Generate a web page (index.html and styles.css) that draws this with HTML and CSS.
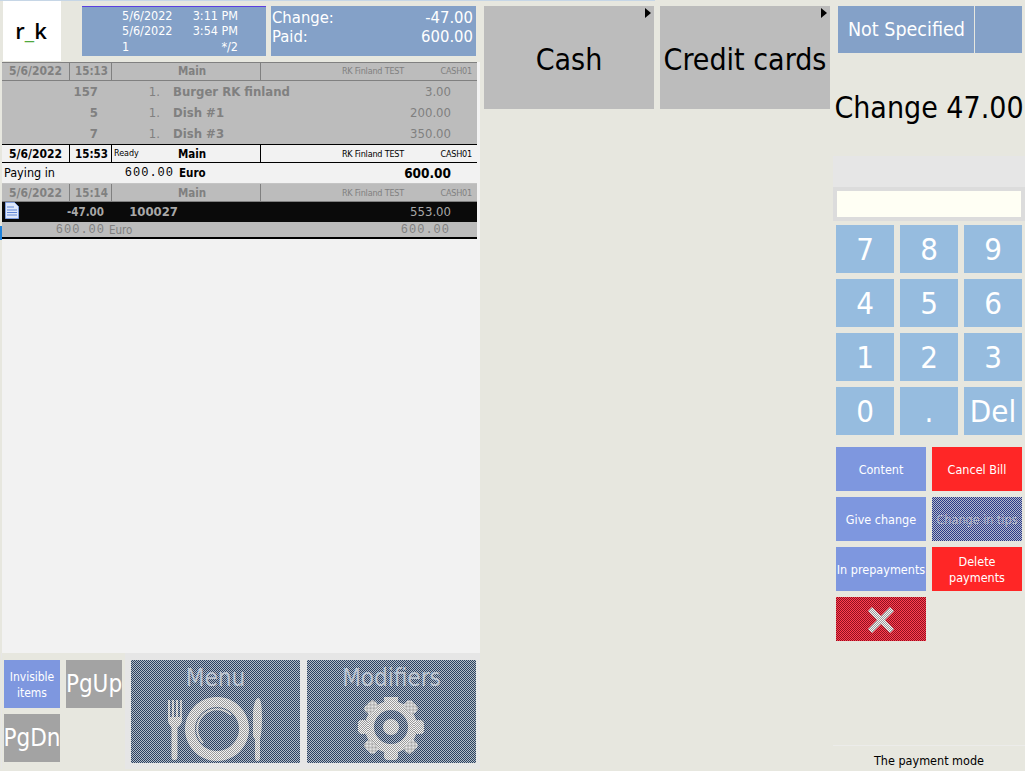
FILE: index.html
```html
<!DOCTYPE html>
<html lang="en">
<head>
<meta charset="utf-8">
<title>Payment</title>
<link rel="stylesheet" href="styles.css">
</head>
<body>
<svg class="defs" width="0" height="0" aria-hidden="true">
  <defs>
    <pattern id="dither" width="2" height="2" patternUnits="userSpaceOnUse">
      <rect width="2" height="2" fill="#f4f4f4"/>
      <rect width="1" height="1" fill="#9a9a9a"/>
      <rect x="1" y="1" width="1" height="1" fill="#9a9a9a"/>
    </pattern>
  </defs>
</svg>
<i class="edge-mark"></i>
<div class="topline"></div>
<div class="app">
  <section class="left">
    <header class="head">
      <div class="logo"><span>r<i class="under">_</i>k</span></div>
      <div class="info-times">
        <div class="times-row"><span>5/6/2022</span><span>3:11 PM</span></div>
        <div class="times-row"><span>5/6/2022</span><span>3:54 PM</span></div>
        <div class="times-row times-last"><span>1</span><span>*/2</span></div>
      </div>
      <div class="info-sum">
        <div class="sum-row"><span>Change:</span><span>-47.00</span></div>
        <div class="sum-row"><span>Paid:</span><span>600.00</span></div>
      </div>
    </header>
    <div class="list">
      <div class="bar bar-grey">
        <b class="c-date">5/6/2022</b><b class="c-time">15:13</b><b class="c-main"><em></em>Main</b><span class="c-rest">RK Finland TEST</span><span class="c-cash">CASH01</span>
      </div>
      <div class="dish"><b class="d-code">157</b><span class="d-qty">1.</span><b class="d-name">Burger RK finland</b><span class="d-price">3.00</span></div>
      <div class="dish"><b class="d-code">5</b><span class="d-qty">1.</span><b class="d-name">Dish #1</b><span class="d-price">200.00</span></div>
      <div class="dish"><b class="d-code">7</b><span class="d-qty">1.</span><b class="d-name">Dish #3</b><span class="d-price">350.00</span></div>
      <div class="bar bar-active">
        <b class="c-date">5/6/2022</b><b class="c-time">15:53</b><b class="c-main"><em>Ready</em>Main</b><span class="c-rest">RK Finland TEST</span><span class="c-cash">CASH01</span>
      </div>
      <div class="paying"><span class="p-label">Paying in</span><span class="p-amount">600.00</span><b class="p-cur">Euro</b><b class="p-total">600.00</b></div>
      <div class="bar bar-grey bar-third">
        <b class="c-date">5/6/2022</b><b class="c-time">15:14</b><b class="c-main"><em></em>Main</b><span class="c-rest">RK Finland TEST</span><span class="c-cash">CASH01</span>
      </div>
      <div class="black-row">
        <svg class="doc" width="14" height="17" viewBox="0 0 14 17"><path d="M.5.5h9l4 4v12H.5z" fill="#dfe8fa" stroke="#7f9fe0"/><path d="M2 5h7M2 8h10M2 10.500h10M2 13h10" stroke="#5f86d8"/></svg>
        <b class="b-diff">-47.00</b><b class="b-code">100027</b><span class="b-sum">553.00</span>
      </div>
      <div class="grey-row"><span class="g-amount">600.00</span><span class="g-cur">Euro</span><span class="g-total">600.00</span></div>
    </div>
    <footer class="foot">
      <div class="foot-small">
        <button class="btn periw small-text">Invisible<br>items</button>
        <button class="btn gray pg">PgUp</button>
        <button class="btn gray pg">PgDn</button>
      </div>
      <button class="btn dither tile">
        <span class="tile-label">Menu</span>
        <svg class="tile-ico" width="169" height="66" viewBox="0 0 169 66">
          <g fill="url(#dither)">
            <path d="M37 3h2v17h2V3h2v17h2V3h2v17h2V3h2v20c0 4-3 6-4.500 7.500V59c0 3-1 4-3 4s-3-1-3-4V30.500C40 29 37 27 37 23z"/>
            <path fill-rule="evenodd" d="M86 0a32 32 0 1 0 .01 0zM86 10a22 22 0 1 1-.01 0z"/>
            <path d="M127 1c3 0 4 8 4 20s-1 17-2 21v18c0 3-1 4-2.500 4s-2.500-1-2.500-4V42c-1-1-2-2-2-4V18c0-10 3-17 5-17z"/>
          </g>
          <path d="M72 46A19.500 19.500 0 0 1 100 18" fill="none" stroke="url(#dither)" stroke-width="2"/>
        </svg>
      </button>
      <button class="btn dither tile">
        <span class="tile-label">Modifiers</span>
        <svg class="tile-ico" width="169" height="66" viewBox="0 0 169 66">
          <g fill="url(#dither)" transform="translate(84 30)">
            <circle r="8"/>
            <path fill-rule="evenodd" d="M0-26a26 26 0 1 0 .01 0zM0-17a17 17 0 1 1-.01 0z"/>
            <rect x="-7" y="-33" width="14" height="10" rx="4"/>
            <rect x="-7" y="-33" width="14" height="10" rx="4" transform="rotate(45)"/>
            <rect x="-7" y="-33" width="14" height="10" rx="4" transform="rotate(90)"/>
            <rect x="-7" y="-33" width="14" height="10" rx="4" transform="rotate(135)"/>
            <rect x="-7" y="-33" width="14" height="10" rx="4" transform="rotate(180)"/>
            <rect x="-7" y="-33" width="14" height="10" rx="4" transform="rotate(225)"/>
            <rect x="-7" y="-33" width="14" height="10" rx="4" transform="rotate(270)"/>
            <rect x="-7" y="-33" width="14" height="10" rx="4" transform="rotate(315)"/>
          </g>
        </svg>
      </button>
    </footer>
  </section>

  <section class="middle">
    <button class="btn pay">Cash<i class="arrow"></i></button>
    <button class="btn pay">Credit cards<i class="arrow"></i></button>
  </section>

  <section class="right">
    <div class="spec">
      <div class="spec-name">Not Specified</div>
      <div class="spec-side"></div>
    </div>
    <div class="change">Change 47.00</div>
    <div class="display"></div>
    <div class="entry"><div class="entry-field"></div></div>
    <div class="keypad">
      <button class="btn key">7</button><button class="btn key">8</button><button class="btn key">9</button>
      <button class="btn key">4</button><button class="btn key">5</button><button class="btn key">6</button>
      <button class="btn key">1</button><button class="btn key">2</button><button class="btn key">3</button>
      <button class="btn key">0</button><button class="btn key">.</button><button class="btn key">Del</button>
    </div>
    <div class="actions">
      <button class="btn periw act">Content</button>
      <button class="btn red act">Cancel Bill</button>
      <button class="btn periw act">Give change</button>
      <button class="btn dither-blue act">Change in tips</button>
      <button class="btn periw act tight">In prepayments</button>
      <button class="btn red act">Delete<br>payments</button>
      <button class="btn dither-red act">
        <svg width="26" height="26" viewBox="0 0 26 26"><path d="M4 0l9 9 9-9 4 4-9 9 9 9-4 4-9-9-9 9-4-4 9-9-9-9z" fill="url(#dither)"/></svg>
      </button>
    </div>
    <div class="status">The payment mode</div>
  </section>
</div>
</body>
</html>
```

FILE: styles.css
```css
* { box-sizing: border-box; }
html, body { margin: 0; padding: 0; }
body {
  width: 1025px;
  height: 771px;
  overflow: hidden;
  background: #e7e7df;
  font-family: "DejaVu Sans Condensed", "DejaVu Sans", sans-serif;
  font-size: 12px;
  color: #000;
}
.defs { position: absolute; }
.edge-mark { position: absolute; left: 0; top: 226px; width: 2px; height: 14px; background: #1e82dc; }
.topline { width: 655px; height: 1px; background: #c6d6e6; }
.app { display: flex; height: 770px; }

.btn {
  display: flex;
  align-items: center;
  justify-content: center;
  margin: 0;
  padding: 0;
  border: 0;
  font-family: inherit;
  text-align: center;
  color: #fff;
}
.periw { background: #7e97df; }
.gray { background: #a3a3a3; }
.red { background: #ff2626; }
.dither, .dither-blue, .dither-red { background-size: 2px 2px; }
.dither { background-image: repeating-conic-gradient(#2a4060 0 25%, #b4bcc8 0 50%); }
.dither-blue { background-image: repeating-conic-gradient(#2a3a88 0 25%, #b4b8cc 0 50%); }
.dither-red { background-image: repeating-conic-gradient(#901020 0 25%, #ff4050 0 50%); }

/* left */
.left { width: 480px; display: flex; flex-direction: column; }
.head { display: flex; height: 61px; padding-left: 3px; }
.logo {
  width: 58px;
  height: 60px;
  background: #fff;
  display: flex;
  align-items: center;
  justify-content: center;
  font-family: "Open Sans", sans-serif;
  font-size: 22px;
  font-weight: 600;
  padding: 0 2px 3px 0;
}
.under { font-style: normal; color: #4fa83d; }
.info-times {
  width: 184px;
  height: 50px;
  margin: 5px 0 0 21px;
  padding: 1px 28px 0 40px;
  background: #84a1c8;
  border-top: 1px solid #5b3fe0;
  color: #fff;
  font-size: 12.500px;
}
.times-row { display: flex; justify-content: space-between; height: 15px; line-height: 15px; }
.times-last { margin-top: 1px; }
.info-sum {
  width: 205px;
  height: 50px;
  margin: 5px 0 0 5px;
  padding: 2px 3px 0 1px;
  background: #84a1c8;
  color: #fff;
  font-size: 16.500px;
}
.sum-row { display: flex; justify-content: space-between; height: 19px; line-height: 19px; }

.list { flex: 1; margin-left: 2px; background: #f2f2f2; display: flex; flex-direction: column; }
.bar, .dish, .paying, .black-row, .grey-row { width: 475px; flex: none; }
.bar { display: flex; height: 19px; line-height: 17px; align-items: stretch; }
.bar b { font-size: 11.500px; }
.bar .c-date { width: 68px; padding-left: 7px; border-right: 1px solid; font-size: 12px; }
.c-time { width: 42px; padding-left: 5px; border-right: 1px solid; }
.c-main { width: 149px; border-right: 1px solid; display: flex; }
.c-main em { width: 66px; padding-left: 2px; font: 8px/17px "DejaVu Sans", sans-serif; }
.c-rest { width: 143px; text-align: right; font-size: 9px; letter-spacing: -.2px; }
.c-cash { width: 70px; text-align: right; padding-right: 2px; font-size: 9px; letter-spacing: -.2px; }
.bar-grey { background: #bcbcbc; color: #808080; border-top: 1px solid #808080; border-bottom: 1px solid #808080; }
.bar-active { background: #f2f2f2; color: #000; border-top: 1px solid #000; border-bottom: 1px solid #000; line-height: 19px; }
.bar-third { border-top: 1px solid #c4c4c4; line-height: 19px; }

.dish { display: flex; height: 21px; line-height: 21px; background: #bcbcbc; color: #808080; font-size: 13px; }
.d-code { width: 96px; text-align: right; }
.d-qty { width: 62px; text-align: right; }
.d-name { width: 170px; padding-left: 13px; flex: none; white-space: nowrap; }
.d-price { flex: none; width: 121px; text-align: right; }

.paying { display: flex; height: 20px; line-height: 20px; background: #f2f2f2; }
.p-label { width: 58px; padding-left: 2px; font-size: 12.500px; }
.p-amount { width: 114px; text-align: right; font: 12px/20px "Liberation Mono", monospace; letter-spacing: 1px; }
.p-cur { width: 40px; padding-left: 5px; font-size: 11.500px; flex: none; }
.p-total { width: 237px; text-align: right; font-size: 13.500px; flex: none; }

.black-row { display: flex; height: 20px; line-height: 20px; background: #0a0a0a; color: #a8a8a8; position: relative; }
.doc { position: absolute; left: 3px; top: 0; }
.b-diff { width: 102px; text-align: right; font-size: 11.500px; }
.b-code { width: 74px; text-align: right; font-size: 13px; }
.b-sum { width: 273px; text-align: right; font-size: 13px; }

.grey-row { display: flex; height: 17px; line-height: 16px; background: #bcbcbc; color: #808080; border-bottom: 2px solid #000; }
.g-amount { width: 103px; text-align: right; font: 12px/16px "Liberation Mono", monospace; letter-spacing: 1px; }
.g-cur { width: 40px; padding-left: 4px; font-size: 11.500px; }
.g-total { width: 305px; text-align: right; font: 12px/16px "Liberation Mono", monospace; letter-spacing: 1px; }

.foot { display: flex; height: 116px; margin: 0 0 2px 1px; background: #e6e6e6; padding: 7px 0 6px 3px; flex: none; }
.foot-small {
  width: 123px;
  margin: -7px 6px -6px -2px;
  padding: 7px 3px 0 2px;
  background: #e7e7df;
  display: grid;
  grid-template-columns: 56px 56px;
  grid-auto-rows: 48px;
  gap: 6px;
}
.small-text { font-size: 12px; line-height: 16px; padding-top: 1px; }
.pg { font-size: 24px; }
.tile { width: 169px; height: 103px; flex-direction: column; justify-content: flex-start; margin-right: 7px; color: #bcc4d0; }
.tile:last-child { margin-right: 0; }
.tile-label { height: 37px; line-height: 36px; font-size: 24px; }
.tile-ico { display: block; flex: none; }

/* middle */
.middle { width: 353px; padding: 5px 0 0 4px; display: flex; align-items: flex-start; gap: 6px; }
.pay { position: relative; width: 170px; height: 103px; padding-top: 3px; background: #bcbcbc; color: #000; font-size: 30px; white-space: nowrap; }
.arrow {
  position: absolute;
  top: 2px;
  right: 3px;
  border-left: 6px solid #000;
  border-top: 5px solid transparent;
  border-bottom: 5px solid transparent;
}

/* right */
.right { width: 192px; display: flex; flex-direction: column; }
.spec { display: flex; height: 47px; margin: 5px 3px 0 5px; gap: 1px; }
.spec-name { width: 136px; background: #84a1c8; color: #fff; font-size: 19.500px; line-height: 48px; padding-left: 10px; white-space: nowrap; }
.spec-side { flex: 1; background: #84a1c8; }
.change { height: 103px; line-height: 109px; text-align: center; font-size: 30px; white-space: nowrap; }
.display { height: 31px; background: #e6e6e6; }
.entry { height: 34px; padding: 4px; background: #dcdcdc; }
.entry-field { height: 26px; background: #fffff4; }
.keypad { margin: 4px 3px 0; display: grid; grid-template-columns: repeat(3, 58px); grid-auto-rows: 48px; gap: 6px; }
.key { background: #96bcdf; font-size: 31px; }
.actions { margin: 12px 3px 0; display: grid; grid-template-columns: 90px 90px; grid-auto-rows: 44px; gap: 6px; }
.act { font-size: 12.500px; line-height: 16px; padding-top: 1px; }
.dither-blue { color: #b0b4c8; }
.tight { white-space: nowrap; }
.status {
  margin-top: 104px;
  height: 24px;
  border-top: 1px solid #ececea;
  padding-top: 7px;
  text-align: center;
  font-size: 12.500px;
  line-height: 16px;
}
```
